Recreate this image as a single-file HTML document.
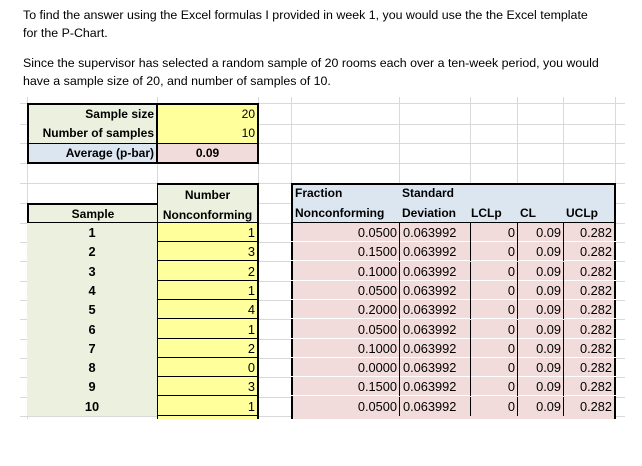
<!DOCTYPE html><html><head><style>
body{margin:0;width:642px;height:466px;background:#fff;position:relative;overflow:hidden;font-family:"Liberation Sans",sans-serif;}
.t{position:absolute;left:23px;font-size:12.4px;color:#000;white-space:nowrap;line-height:18px}
.g{position:absolute;background:#d9d9d9}
.h{position:absolute;left:20px;width:605px;height:1px;background:#d9d9d9}
.c{position:absolute;box-sizing:border-box;font-size:12px;line-height:18px;white-space:nowrap;padding:0 2px;color:#000}
.b{font-weight:bold}
.r{text-align:right}.m{text-align:center}
.y{background:#ffff9c}.gr{background:#ebf1de}.p{background:#f2dcdb}.bl{background:#dce6f1}
.d{position:absolute;left:0;width:642px;height:19px}.d .c{top:0;line-height:19px;font-size:12.8px}
.ln{position:absolute;top:0;width:1px;height:19px;background:#000}
.hl{position:absolute;left:157px;width:102px;height:1px;background:#000;bottom:0}
.pl{position:absolute;left:291px;width:325px;height:1px;background:#fff;bottom:0}
</style></head><body>
<div class="t" style="top:6px">To find the answer using the Excel formulas I provided in week 1, you would use the the Excel template</div>
<div class="t" style="top:24px">for the P-Chart.</div>
<div class="t" style="top:54px">Since the supervisor has selected a random sample of 20 rooms each over a ten-week period, you would</div>
<div class="t" style="top:72px">have a sample size of 20, and number of samples of 10.</div>
<!-- gridlines -->
<div class="g" style="left:27px;top:97px;width:1px;height:322px"></div>
<div class="g" style="left:157px;top:97px;width:1px;height:322px"></div>
<div class="g" style="left:258px;top:97px;width:1px;height:322px"></div>
<div class="g" style="left:291px;top:97px;width:1px;height:322px"></div>
<div class="g" style="left:399px;top:97px;width:1px;height:322px"></div>
<div class="g" style="left:470px;top:97px;width:1px;height:322px"></div>
<div class="g" style="left:517px;top:97px;width:1px;height:322px"></div>
<div class="g" style="left:563px;top:97px;width:1px;height:322px"></div>
<div class="g" style="left:615px;top:97px;width:1px;height:322px"></div>
<div class="h" style="top:103px"></div>
<div class="h" style="top:124px"></div>
<div class="h" style="top:143px"></div>
<div class="h" style="top:163px"></div>
<div class="h" style="top:183px"></div>
<div class="h" style="top:203px"></div>
<div class="h" style="top:223px"></div>
<div class="h" style="top:242px"></div>
<div class="h" style="top:261px"></div>
<div class="h" style="top:281px"></div>
<div class="h" style="top:300px"></div>
<div class="h" style="top:319px"></div>
<div class="h" style="top:339px"></div>
<div class="h" style="top:358px"></div>
<div class="h" style="top:377px"></div>
<div class="h" style="top:397px"></div>
<div class="h" style="top:416px"></div>
<!-- top block -->
<div class="c gr b r" style="left:27px;top:103px;width:131px;height:22px;border:2px solid #000;border-bottom:1px solid #000">Sample size</div>
<div class="c y r" style="left:157px;top:103px;width:102px;height:22px;border:2px solid #000;border-left:1px solid #000;border-bottom:1px solid #000">20</div>
<div class="c gr b r" style="left:27px;top:124px;width:131px;height:20px;border:2px solid #000;border-top:0;border-bottom:1px solid #000;line-height:19px">Number of samples</div>
<div class="c y r" style="left:157px;top:124px;width:102px;height:20px;border:2px solid #000;border-top:0;border-left:1px solid #000;border-bottom:1px solid #000;line-height:19px">10</div>
<div class="c bl b r" style="left:27px;top:143px;width:131px;height:21px;border:2px solid #000;border-top:1px solid #000">Average (p-bar)</div>
<div class="c p b m" style="left:157px;top:143px;width:102px;height:21px;border:2px solid #000;border-top:1px solid #000;border-left:1px solid #000">0.09</div>
<!-- headers -->
<div class="c gr b m" style="left:27px;top:203px;width:131px;height:21px;border:2px solid #000;border-right:1px solid #000;line-height:19px">Sample</div>
<div class="c gr b m" style="left:157px;top:183px;width:102px;height:41px;border:2px solid #000;border-left:1px solid #000;line-height:20px">Number<br>Nonconforming</div>
<div class="c bl b" style="left:291px;top:183px;width:325px;height:41px;border:2px solid #000;padding:0"></div>
<div class="c b" style="left:293px;top:184px">Fraction</div>
<div class="c b" style="left:293px;top:204px">Nonconforming</div>
<div class="c b" style="left:400px;top:184px">Standard</div>
<div class="c b" style="left:400px;top:204px">Deviation</div>
<div class="c b" style="left:469px;top:204px">LCLp</div>
<div class="c b" style="left:518px;top:204px">CL</div>
<div class="c b" style="left:564px;top:204px">UCLp</div>
<!-- data rows -->
<div class="c gr" style="left:27px;top:223px;width:130px;height:193px"></div>
<div class="c y" style="left:157px;top:223px;width:102px;height:196px;border-left:1px solid #000;border-right:2px solid #000"></div>
<div class="c p" style="left:291px;top:223px;width:325px;height:196px;border-left:2px solid #000;border-right:2px solid #000"></div>
<div class="d" style="top:223px"><div class="c b m" style="left:27px;width:130px">1</div><div class="c r" style="left:157px;width:100px">1</div><div class="c r" style="left:293px;width:106px">0.0500</div><div class="c" style="left:401px">0.063992</div><div class="c r" style="left:470px;width:47px">0</div><div class="c r" style="left:517px;width:46px">0.09</div><div class="c r" style="left:563px;width:51px">0.282</div><div class="hl"></div><div class="pl"></div><div class="ln" style="left:399px"></div><div class="ln" style="left:470px"></div><div class="ln" style="left:517px"></div><div class="ln" style="left:563px"></div></div>
<div class="d" style="top:242.3px"><div class="c b m" style="left:27px;width:130px">2</div><div class="c r" style="left:157px;width:100px">3</div><div class="c r" style="left:293px;width:106px">0.1500</div><div class="c" style="left:401px">0.063992</div><div class="c r" style="left:470px;width:47px">0</div><div class="c r" style="left:517px;width:46px">0.09</div><div class="c r" style="left:563px;width:51px">0.282</div><div class="hl"></div><div class="pl"></div><div class="ln" style="left:399px"></div><div class="ln" style="left:470px"></div><div class="ln" style="left:517px"></div><div class="ln" style="left:563px"></div></div>
<div class="d" style="top:261.6px"><div class="c b m" style="left:27px;width:130px">3</div><div class="c r" style="left:157px;width:100px">2</div><div class="c r" style="left:293px;width:106px">0.1000</div><div class="c" style="left:401px">0.063992</div><div class="c r" style="left:470px;width:47px">0</div><div class="c r" style="left:517px;width:46px">0.09</div><div class="c r" style="left:563px;width:51px">0.282</div><div class="hl"></div><div class="pl"></div><div class="ln" style="left:399px"></div><div class="ln" style="left:470px"></div><div class="ln" style="left:517px"></div><div class="ln" style="left:563px"></div></div>
<div class="d" style="top:280.9px"><div class="c b m" style="left:27px;width:130px">4</div><div class="c r" style="left:157px;width:100px">1</div><div class="c r" style="left:293px;width:106px">0.0500</div><div class="c" style="left:401px">0.063992</div><div class="c r" style="left:470px;width:47px">0</div><div class="c r" style="left:517px;width:46px">0.09</div><div class="c r" style="left:563px;width:51px">0.282</div><div class="hl"></div><div class="pl"></div><div class="ln" style="left:399px"></div><div class="ln" style="left:470px"></div><div class="ln" style="left:517px"></div><div class="ln" style="left:563px"></div></div>
<div class="d" style="top:300.2px"><div class="c b m" style="left:27px;width:130px">5</div><div class="c r" style="left:157px;width:100px">4</div><div class="c r" style="left:293px;width:106px">0.2000</div><div class="c" style="left:401px">0.063992</div><div class="c r" style="left:470px;width:47px">0</div><div class="c r" style="left:517px;width:46px">0.09</div><div class="c r" style="left:563px;width:51px">0.282</div><div class="hl"></div><div class="pl"></div><div class="ln" style="left:399px"></div><div class="ln" style="left:470px"></div><div class="ln" style="left:517px"></div><div class="ln" style="left:563px"></div></div>
<div class="d" style="top:319.5px"><div class="c b m" style="left:27px;width:130px">6</div><div class="c r" style="left:157px;width:100px">1</div><div class="c r" style="left:293px;width:106px">0.0500</div><div class="c" style="left:401px">0.063992</div><div class="c r" style="left:470px;width:47px">0</div><div class="c r" style="left:517px;width:46px">0.09</div><div class="c r" style="left:563px;width:51px">0.282</div><div class="hl"></div><div class="pl"></div><div class="ln" style="left:399px"></div><div class="ln" style="left:470px"></div><div class="ln" style="left:517px"></div><div class="ln" style="left:563px"></div></div>
<div class="d" style="top:338.8px"><div class="c b m" style="left:27px;width:130px">7</div><div class="c r" style="left:157px;width:100px">2</div><div class="c r" style="left:293px;width:106px">0.1000</div><div class="c" style="left:401px">0.063992</div><div class="c r" style="left:470px;width:47px">0</div><div class="c r" style="left:517px;width:46px">0.09</div><div class="c r" style="left:563px;width:51px">0.282</div><div class="hl"></div><div class="pl"></div><div class="ln" style="left:399px"></div><div class="ln" style="left:470px"></div><div class="ln" style="left:517px"></div><div class="ln" style="left:563px"></div></div>
<div class="d" style="top:358.1px"><div class="c b m" style="left:27px;width:130px">8</div><div class="c r" style="left:157px;width:100px">0</div><div class="c r" style="left:293px;width:106px">0.0000</div><div class="c" style="left:401px">0.063992</div><div class="c r" style="left:470px;width:47px">0</div><div class="c r" style="left:517px;width:46px">0.09</div><div class="c r" style="left:563px;width:51px">0.282</div><div class="hl"></div><div class="pl"></div><div class="ln" style="left:399px"></div><div class="ln" style="left:470px"></div><div class="ln" style="left:517px"></div><div class="ln" style="left:563px"></div></div>
<div class="d" style="top:377.4px"><div class="c b m" style="left:27px;width:130px">9</div><div class="c r" style="left:157px;width:100px">3</div><div class="c r" style="left:293px;width:106px">0.1500</div><div class="c" style="left:401px">0.063992</div><div class="c r" style="left:470px;width:47px">0</div><div class="c r" style="left:517px;width:46px">0.09</div><div class="c r" style="left:563px;width:51px">0.282</div><div class="hl"></div><div class="pl"></div><div class="ln" style="left:399px"></div><div class="ln" style="left:470px"></div><div class="ln" style="left:517px"></div><div class="ln" style="left:563px"></div></div>
<div class="d" style="top:396.7px"><div class="c b m" style="left:27px;width:130px">10</div><div class="c r" style="left:157px;width:100px">1</div><div class="c r" style="left:293px;width:106px">0.0500</div><div class="c" style="left:401px">0.063992</div><div class="c r" style="left:470px;width:47px">0</div><div class="c r" style="left:517px;width:46px">0.09</div><div class="c r" style="left:563px;width:51px">0.282</div><div class="hl"></div><div class="ln" style="left:399px"></div><div class="ln" style="left:470px"></div><div class="ln" style="left:517px"></div><div class="ln" style="left:563px"></div></div>
</body></html>
